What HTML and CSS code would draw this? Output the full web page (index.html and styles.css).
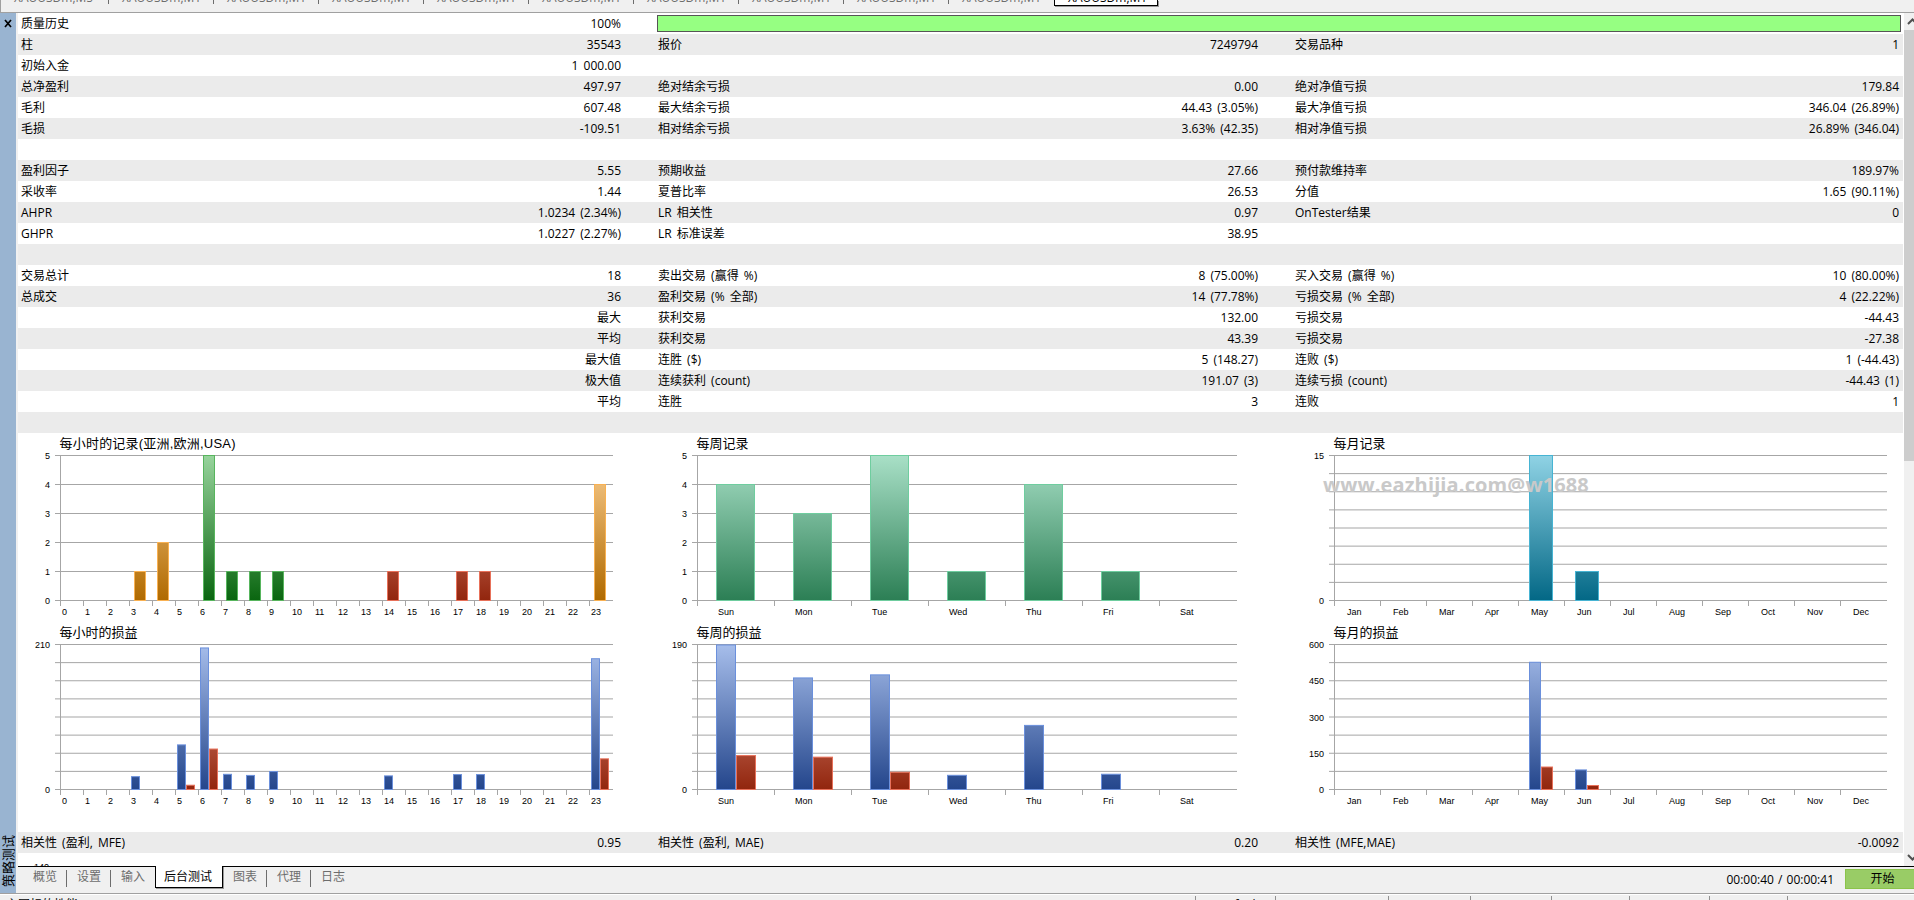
FILE: index.html
```html
<!DOCTYPE html>
<html lang="zh-CN">
<head>
    <meta charset="UTF-8">
    <title>策略测试</title>
    <link rel="stylesheet" href="styles.css">
</head>
<body>
    <div class="chart-tabs">
        <span class="chart-tab">XAUUSDm,M5</span>
        <span class="chart-tab">XAUUSDm,M1</span>
        <span class="chart-tab">XAUUSDm,M1</span>
        <span class="chart-tab">XAUUSDm,M1</span>
        <span class="chart-tab">XAUUSDm,M1</span>
        <span class="chart-tab">XAUUSDm,M1</span>
        <span class="chart-tab">XAUUSDm,M1</span>
        <span class="chart-tab">XAUUSDm,M1</span>
        <span class="chart-tab">XAUUSDm,M1</span>
        <span class="chart-tab last">XAUUSDm,M1</span>
        <span class="chart-tab active">XAUUSDm,M1</span>
    </div>

    <div class="tester">
        <div class="side">
            <svg class="close" width="8" height="9" viewBox="0 0 8 9"><path d="M1 1L7 8M7 1L1 8" stroke="#000" stroke-width="1.7"/></svg>
            <span class="side-title">策略测试</span>
        </div>

        <div class="main">
            <div class="view">
                <div class="report">
                    <table>
                        <colgroup>
                            <col class="name"><col class="val"><col class="name"><col class="val"><col class="name"><col>
                        </colgroup>
                        <tr><td>质量历史</td><td>100%</td><td colspan="4" class="quality"><div class="quality-bar"></div></td></tr>
                        <tr><td>柱</td><td>35543</td><td>报价</td><td>7249794</td><td>交易品种</td><td>1</td></tr>
                        <tr><td>初始入金</td><td>1 000.00</td><td></td><td></td><td></td><td></td></tr>
                        <tr><td>总净盈利</td><td>497.97</td><td>绝对结余亏损</td><td>0.00</td><td>绝对净值亏损</td><td>179.84</td></tr>
                        <tr><td>毛利</td><td>607.48</td><td>最大结余亏损</td><td>44.43 (3.05%)</td><td>最大净值亏损</td><td>346.04 (26.89%)</td></tr>
                        <tr><td>毛损</td><td>-109.51</td><td>相对结余亏损</td><td>3.63% (42.35)</td><td>相对净值亏损</td><td>26.89% (346.04)</td></tr>
                        <tr><td colspan="6"></td></tr>
                        <tr><td>盈利因子</td><td>5.55</td><td>预期收益</td><td>27.66</td><td>预付款维持率</td><td>189.97%</td></tr>
                        <tr><td>采收率</td><td>1.44</td><td>夏普比率</td><td>26.53</td><td>分值</td><td>1.65 (90.11%)</td></tr>
                        <tr><td>AHPR</td><td>1.0234 (2.34%)</td><td>LR 相关性</td><td>0.97</td><td>OnTester结果</td><td>0</td></tr>
                        <tr><td>GHPR</td><td>1.0227 (2.27%)</td><td>LR 标准误差</td><td>38.95</td><td></td><td></td></tr>
                        <tr><td colspan="6"></td></tr>
                        <tr><td>交易总计</td><td>18</td><td>卖出交易 (赢得 %)</td><td>8 (75.00%)</td><td>买入交易 (赢得 %)</td><td>10 (80.00%)</td></tr>
                        <tr><td>总成交</td><td>36</td><td>盈利交易 (% 全部)</td><td>14 (77.78%)</td><td>亏损交易 (% 全部)</td><td>4 (22.22%)</td></tr>
                        <tr><td></td><td>最大</td><td>获利交易</td><td>132.00</td><td>亏损交易</td><td>-44.43</td></tr>
                        <tr><td></td><td>平均</td><td>获利交易</td><td>43.39</td><td>亏损交易</td><td>-27.38</td></tr>
                        <tr><td></td><td>最大值</td><td>连胜 ($)</td><td>5 (148.27)</td><td>连败 ($)</td><td>1 (-44.43)</td></tr>
                        <tr><td></td><td>极大值</td><td>连续获利 (count)</td><td>191.07 (3)</td><td>连续亏损 (count)</td><td>-44.43 (1)</td></tr>
                        <tr><td></td><td>平均</td><td>连胜</td><td>3</td><td>连败</td><td>1</td></tr>
                        <tr><td colspan="6"></td></tr>
                    </table>

                    <div class="charts">
                        <svg id="hourEntries"></svg>
                        <svg id="weekEntries"></svg>
                        <svg id="monthEntries"></svg>
                        <svg id="hourProfit"></svg>
                        <svg id="weekProfit"></svg>
                        <svg id="monthProfit"></svg>
                        <div class="watermark">www.eazhijia.com@w1688</div>
                    </div>

                    <table class="correlation">
                        <colgroup>
                            <col class="name"><col class="val"><col class="name"><col class="val"><col class="name"><col>
                        </colgroup>
                        <tr><td>相关性 (盈利, MFE)</td><td>0.95</td><td>相关性 (盈利, MAE)</td><td>0.20</td><td>相关性 (MFE,MAE)</td><td>-0.0092</td></tr>
                    </table>
                    <div class="next-chart">140</div>
                </div>

                <div class="scrollbar">
                    <svg class="arrow" width="10" height="17" viewBox="0 0 10 17"><path d="M4 11L8.5 6.5L13 11" fill="none" stroke="#505050" stroke-width="2"/></svg>
                    <div class="thumb"></div>
                    <svg class="arrow" width="10" height="17" viewBox="0 0 10 17"><path d="M4 6L8.5 10.5L13 6" fill="none" stroke="#505050" stroke-width="2"/></svg>
                </div>
            </div>

            <div class="tabs">
                <span class="tab">概览</span>
                <span class="tab">设置</span>
                <span class="tab no-line">输入</span>
                <span class="tab active">后台测试</span>
                <span class="tab">图表</span>
                <span class="tab">代理</span>
                <span class="tab no-line">日志</span>
                <span class="time">00:00:40 / 00:00:41</span>
                <button class="start">开始</button>
            </div>
        </div>
    </div>

    <div class="status">
        <span class="status-help">主图标的性能</span>
        <span class="status-cell profile">Default</span>
        <span class="status-cell w113"></span>
        <span class="status-cell w82"></span>
        <span class="status-cell w81"></span>
        <span class="status-cell w78"></span>
        <span class="status-cell w80"></span>
        <span class="status-cell w78"></span>
        <span class="status-cell"></span>
    </div>

    <script src="script.js"></script>
</body>
</html>
```

FILE: styles.css
```css
* {
    box-sizing: border-box;
}

body {
    margin: 0;
    height: 900px;
    display: flex;
    flex-direction: column;
    overflow: hidden;
    background: #f0f0f0;
    color: #000;
    font: 12px/21px "Open Sans", "Noto Sans CJK SC", sans-serif;
    word-spacing: 2px;
}

/* open chart tabs, cut off by the top of the window */
.chart-tabs {
    display: flex;
    height: 13px;
    padding-left: 1px;
    border-bottom: 1px solid #a0a0a0;
    box-shadow: inset 1px 0 #a0a0a0;
    color: #6d6d6d;
    overflow: hidden;
}

.chart-tab {
    display: flex;
    align-items: flex-end;
    width: 105px;
    height: 4px;
    padding-left: 13px;
    line-height: 12px;
    border-right: 1px solid #6d6d6d;
    overflow: hidden;
}

.chart-tab:first-child {
    width: 108px;
}

.chart-tab.last {
    border-right: 0;
}

.chart-tab.active {
    height: 6px;
    width: 104px;
    padding-bottom: 1px;
    background: #fff;
    color: #000;
    border: solid #000;
    border-width: 0 1px 1px;
    box-shadow: 1px 1px #999;
}

.tester {
    display: flex;
    height: 880px;
}

.side {
    display: flex;
    flex-direction: column;
    justify-content: space-between;
    width: 16px;
    padding: 6px 0;
    background: #99b4d1;
}

.close {
    margin-left: 4px;
}

.side-title {
    writing-mode: vertical-rl;
    text-orientation: sideways;
    transform: rotate(180deg);
    line-height: 16px;
    font-size: 13px;
}

.main {
    flex: 1;
    margin-left: 2px;
    min-width: 0;
}

.view {
    display: flex;
    height: 853px;
    background: #fff;
}

.report {
    width: 1885px;
    height: 853px;
    overflow: hidden;
}

table {
    width: 1885px;
    table-layout: fixed;
    border-collapse: collapse;
}

.name {
    width: 300px;
}

.val {
    width: 337px;
}

tr {
    height: 21px;
}

tr:nth-child(even),
.correlation tr {
    background: #ebebeb;
}

td {
    height: 21px;
    padding: 0 3px;
    line-height: 20px;
    white-space: nowrap;
}

td:nth-child(even) {
    text-align: right;
    padding-right: 34px;
}

td:last-child {
    padding-right: 4px;
}

td.quality {
    padding: 0 2px;
}

.quality-bar {
    height: 17px;
    background: #96ff82;
    border: 1px solid #555;
}

.charts {
    position: relative;
    display: grid;
    grid-template-columns: 637px 637px 611px;
    grid-template-rows: 189px 210px;
    height: 399px;
}

.charts svg {
    width: 100%;
    height: 189px;
    display: block;
}

.charts .title {
    font: 13px "Liberation Sans", "Noto Sans CJK SC", sans-serif;
}

.charts .label {
    font: 9px "Liberation Sans", sans-serif;
}

.watermark {
    position: absolute;
    left: 1305px;
    top: 38px;
    color: #c9c9c9;
    font-size: 20px;
    line-height: 28px;
    font-weight: bold;
    letter-spacing: 0.13px;
}

.next-chart {
    margin: 8px 0 0 16px;
    font: 9px "Liberation Sans", sans-serif;
    line-height: 12px;
}

.scrollbar {
    flex: 1;
    display: flex;
    flex-direction: column;
    margin-left: 1px;
    background: #f0f0f0;
}

.thumb {
    height: 431px;
    margin-bottom: auto;
    background: #cdcdcd;
}

.tabs {
    display: flex;
    height: 27px;
    padding-left: 5px;
    background: #f0f0f0;
    box-shadow: inset 0 1px #000;
    color: #6d6d6d;
}

.tab {
    width: 44px;
    height: 17px;
    margin-top: 4px;
    padding-left: 10px;
    line-height: 14px;
    border-right: 1px solid #6d6d6d;
}

.tab.no-line {
    border-right: 0;
}

.tab.active {
    width: 68px;
    height: 22px;
    margin-top: 0;
    padding: 4px 0 0 8px;
    background: #fff;
    color: #000;
    border: solid #000;
    border-width: 0 1px 1px;
    box-shadow: 1px 1px #999;
}

.time {
    margin-left: auto;
    padding: 3px 11px 0 0;
    color: #000;
    word-spacing: 1px;
}

.start {
    width: 69px;
    height: 20px;
    margin-top: 3px;
    padding: 0 0 0 5px;
    background: #99cc66;
    border: solid #8bc34a;
    border-width: 1px 0 1px 1px;
    font: inherit;
    line-height: 16px;
}

.status {
    display: flex;
    height: 7px;
    border-top: 1px solid #a0a0a0;
    box-shadow: inset 0 1px #fff;
    overflow: hidden;
}

.status-help {
    width: 1195px;
    padding: 3px 0 0 6px;
    line-height: 16px;
}

.status-cell {
    height: 5px;
    margin-top: 2px;
    border-left: 1px solid #909090;
}

.profile {
    width: 80px;
    padding-left: 23px;
    line-height: 17px;
}

.w113 {
    width: 113px;
}

.w82 {
    width: 82px;
}

.w81 {
    width: 81px;
}

.w78 {
    width: 78px;
}

.w80 {
    width: 80px;
}
```

FILE: script.js
```javascript
const NS = 'http://www.w3.org/2000/svg';
const HEIGHT = 145;
const TOP = 22;
const LEFT = 42;

// top and bottom of the gradient, outline
const colors = {
    orange: ['#fbcf93', '#b06a00', '#f9b152'],
    green: ['#98d49d', '#0a6610', '#57b55d'],
    red: ['#f0a898', '#92260e', '#e8715a'],
    teal: ['#a9e0c7', '#2c7f55', '#6fcd9f'],
    cyan: ['#90d3e5', '#036886', '#47b4d3'],
    blue: ['#a7beeb', '#24468c', '#6b90dc']
};

const hours = [...Array(24).keys()];
const days = ['Sun', 'Mon', 'Tue', 'Wed', 'Thu', 'Fri', 'Sat'];
const months = ['Jan', 'Feb', 'Mar', 'Apr', 'May', 'Jun', 'Jul', 'Aug', 'Sep', 'Oct', 'Nov', 'Dec'];

function add(parent, name, attrs, text) {
    const el = document.createElementNS(NS, name);
    for (const key in attrs) el.setAttribute(key, attrs[key]);
    if (text !== undefined) el.textContent = text;
    parent.appendChild(el);
    return el;
}

function drawChart(id, o) {
    const svg = document.getElementById(id);
    const bottom = TOP + HEIGHT;
    const width = o.step * o.names.length;

    for (const color in colors) {
        const g = add(svg, 'linearGradient', { id: id + color, gradientUnits: 'userSpaceOnUse', x1: 0, x2: 0, y1: TOP, y2: bottom });
        add(g, 'stop', { offset: 0, 'stop-color': colors[color][0] });
        add(g, 'stop', { offset: 1, 'stop-color': colors[color][1] });
    }

    const title = add(svg, 'text', { class: 'title', x: LEFT - 0.5, y: 15 }, o.title);
    if (o.titleWidth) title.setAttribute('textLength', o.titleWidth);

    // grid and axes
    for (let i = 0; i <= o.lines; i++) {
        add(svg, 'rect', { x: LEFT - 5, y: TOP + i * HEIGHT / o.lines, width: width + 6, height: 1, fill: '#a6a6a6' });
    }
    add(svg, 'rect', { x: LEFT, y: TOP, width: 1, height: HEIGHT, fill: '#a6a6a6' });
    o.ticks.forEach(v => {
        const y = bottom - v / o.max * HEIGHT + 4;
        add(svg, 'text', { class: 'label', x: LEFT - 10, y: Math.round(y), 'text-anchor': 'end' }, v);
    });
    o.names.forEach((name, i) => {
        const x = LEFT + i * o.step;
        add(svg, 'rect', { x: x, y: bottom, width: 1, height: 6, fill: '#a6a6a6' });
        add(svg, 'text', { class: 'label', x: x + o.labelPad, y: bottom + 15 }, name);
    });

    // [slot, value, color, position in slot]
    o.bars.forEach(([slot, value, color, pos = 0]) => {
        const h = value / o.max * HEIGHT;
        add(svg, 'rect', {
            x: LEFT + slot * o.step + o.barPad + pos * o.barWidth + 0.5,
            y: bottom - h + 0.5,
            width: o.barWidth - 1,
            height: h,
            fill: `url(#${id}${color})`,
            stroke: colors[color][2]
        });
    });
}

drawChart('hourEntries', {
    title: '每小时的记录(亚洲,欧洲,USA)', titleWidth: 176, names: hours, step: 23, labelPad: 2,
    max: 5, lines: 5, ticks: [0, 1, 2, 3, 4, 5], barPad: 5, barWidth: 12,
    bars: [[3, 1, 'orange'], [4, 2, 'orange'], [6, 5, 'green'], [7, 1, 'green'], [8, 1, 'green'], [9, 1, 'green'],
        [14, 1, 'red'], [17, 1, 'red'], [18, 1, 'red'], [23, 4, 'orange']]
});

drawChart('weekEntries', {
    title: '每周记录', names: days, step: 77, labelPad: 21,
    max: 5, lines: 5, ticks: [0, 1, 2, 3, 4, 5], barPad: 19, barWidth: 39,
    bars: [[0, 4, 'teal'], [1, 3, 'teal'], [2, 5, 'teal'], [3, 1, 'teal'], [4, 4, 'teal'], [5, 1, 'teal']]
});

drawChart('monthEntries', {
    title: '每月记录', names: months, step: 46, labelPad: 13,
    max: 15, lines: 8, ticks: [0, 15], barPad: 11, barWidth: 24,
    bars: [[4, 15, 'cyan'], [5, 3, 'cyan']]
});

drawChart('hourProfit', {
    title: '每小时的损益', names: hours, step: 23, labelPad: 2,
    max: 210, lines: 8, ticks: [0, 210], barPad: 2, barWidth: 9,
    bars: [[3, 18.6, 'blue'], [5, 64.6, 'blue'], [5, 6.2, 'red', 1], [6, 205, 'blue'], [6, 58.6, 'red', 1],
        [7, 22, 'blue'], [8, 20.4, 'blue'], [9, 26, 'blue'], [14, 19.7, 'blue'], [17, 21.6, 'blue'],
        [18, 21.6, 'blue'], [23, 189.4, 'blue'], [23, 44.4, 'red', 1]]
});

drawChart('weekProfit', {
    title: '每周的损益', names: days, step: 77, labelPad: 21,
    max: 190, lines: 8, ticks: [0, 190], barPad: 19, barWidth: 20,
    bars: [[0, 189.4, 'blue'], [0, 44.43, 'red', 1], [1, 146.2, 'blue'], [1, 42.4, 'red', 1], [2, 150.2, 'blue'],
        [2, 22.6, 'red', 1], [3, 18.6, 'blue'], [4, 84, 'blue'], [5, 20, 'blue']]
});

drawChart('monthProfit', {
    title: '每月的损益', names: months, step: 46, labelPad: 13,
    max: 600, lines: 8, ticks: [0, 150, 300, 450, 600], barPad: 11, barWidth: 12,
    bars: [[4, 526.5, 'blue'], [4, 93, 'red', 1], [5, 81, 'blue'], [5, 16.5, 'red', 1]]
});
```
